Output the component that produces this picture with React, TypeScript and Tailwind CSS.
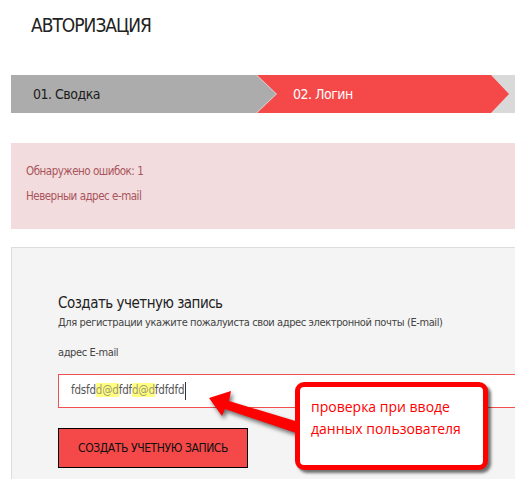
const cond = "font-['DejaVu_Sans_Condensed','DejaVu_Sans',sans-serif]";

function Steps() {
  return (
    <div className="mt-[37px] flex h-[38px] bg-[#d9d9d9]">
      <div className="relative z-10 flex w-[265px] shrink-0 items-center bg-[#acacac] pl-[22px] text-[14px] tracking-[-0.5px] text-[#1c1c1c] [clip-path:polygon(0_0,245px_0,100%_50%,245px_100%,0_100%)]">
        01. Сводка
      </div>
      <div className="-ml-[19px] flex w-[252px] shrink-0 items-center bg-[#f54848] pl-[36px] text-[14px] tracking-[-0.5px] text-white [clip-path:polygon(0_0,234px_0,100%_50%,234px_100%,0_100%,20px_50%)]">
        02. Логин
      </div>
    </div>
  );
}

function ErrorBox() {
  return (
    <div className="mt-[30px] h-[86px] bg-[#f2dcdd] pl-[15px] pt-[16px] text-[11.5px] leading-[25px] tracking-[-0.5px] text-[#a9545c]">
      <p>Обнаружено ошибок: 1</p>
      <p>Неверныи адрес e-mail</p>
    </div>
  );
}

function Hl({ children }: { children: string }) {
  return <span className="bg-[#ffff80] text-[#a09a70]">{children}</span>;
}

function Form() {
  return (
    <div className="mt-[18px] border-l border-t border-[#dddddd] bg-[#f4f4f4] pb-[20px] pl-[46px] pt-[44px]">
      <h2 className="text-[15px] leading-[22px] tracking-[-0.5px] text-[#222]">Создать учетную запись</h2>
      <p className="whitespace-nowrap text-[11px] leading-[18px] tracking-[-0.4px] text-[#444]">
        Для регистрации укажите пожалуиста свои адрес электронной почты (E-mail)
      </p>
      <p className="mt-[12px] text-[11px] leading-[18px] tracking-[-0.4px] text-[#444]">адрес E-mail</p>
      <div className="mt-[12px] flex h-[34px] w-[520px] items-center border border-[#f05050] bg-white pl-[12px] text-[11.5px] tracking-[-0.2px] text-[#555]">
        <span>
          fdsfd<Hl>d@d</Hl>fdf<Hl>d@d</Hl>fdfdfd
        </span>
        <span className="ml-px h-[18px] w-px bg-[#333]" />
      </div>
      <button className="mt-[20px] flex h-[40px] w-[190px] items-center justify-center border border-black bg-[#f54848] text-[12px] tracking-[-0.4px] text-[#111]">
        СОЗДАТЬ УЧЕТНУЮ ЗАПИСЬ
      </button>
    </div>
  );
}

function Callout() {
  return (
    <>
      <svg className="absolute left-0 top-0 h-[479px] w-[515px] drop-shadow-[2px_3px_2px_rgba(0,0,0,0.55)]" viewBox="0 0 515 479">
        <polygon points="209,398 231,391 229,401 302,423 299,434 225,409 222,416" fill="#ff0000" />
      </svg>
      <div className="absolute left-[295px] top-[382px] h-[88px] w-[193px] rounded-[9px] border-[5px] border-[#ff0000] bg-white pl-[11px] pt-[9px] font-['Open_Sans',sans-serif] text-[14px] leading-[22px] text-[#ff0000] shadow-[3px_3px_3px_rgba(0,0,0,0.55)]">
        <p>проверка при вводе</p>
        <p>данных пользователя</p>
      </div>
    </>
  );
}

export default function App() {
  return (
    <div className={`relative h-[479px] w-[515px] overflow-hidden bg-white pl-[11px] ${cond}`}>
      <h1 className="pl-[20px] pt-[12px] text-[19px] leading-[26px] tracking-[-1px] text-[#222]">АВТОРИЗАЦИЯ</h1>
      <Steps />
      <ErrorBox />
      <Form />
      <Callout />
    </div>
  );
}
